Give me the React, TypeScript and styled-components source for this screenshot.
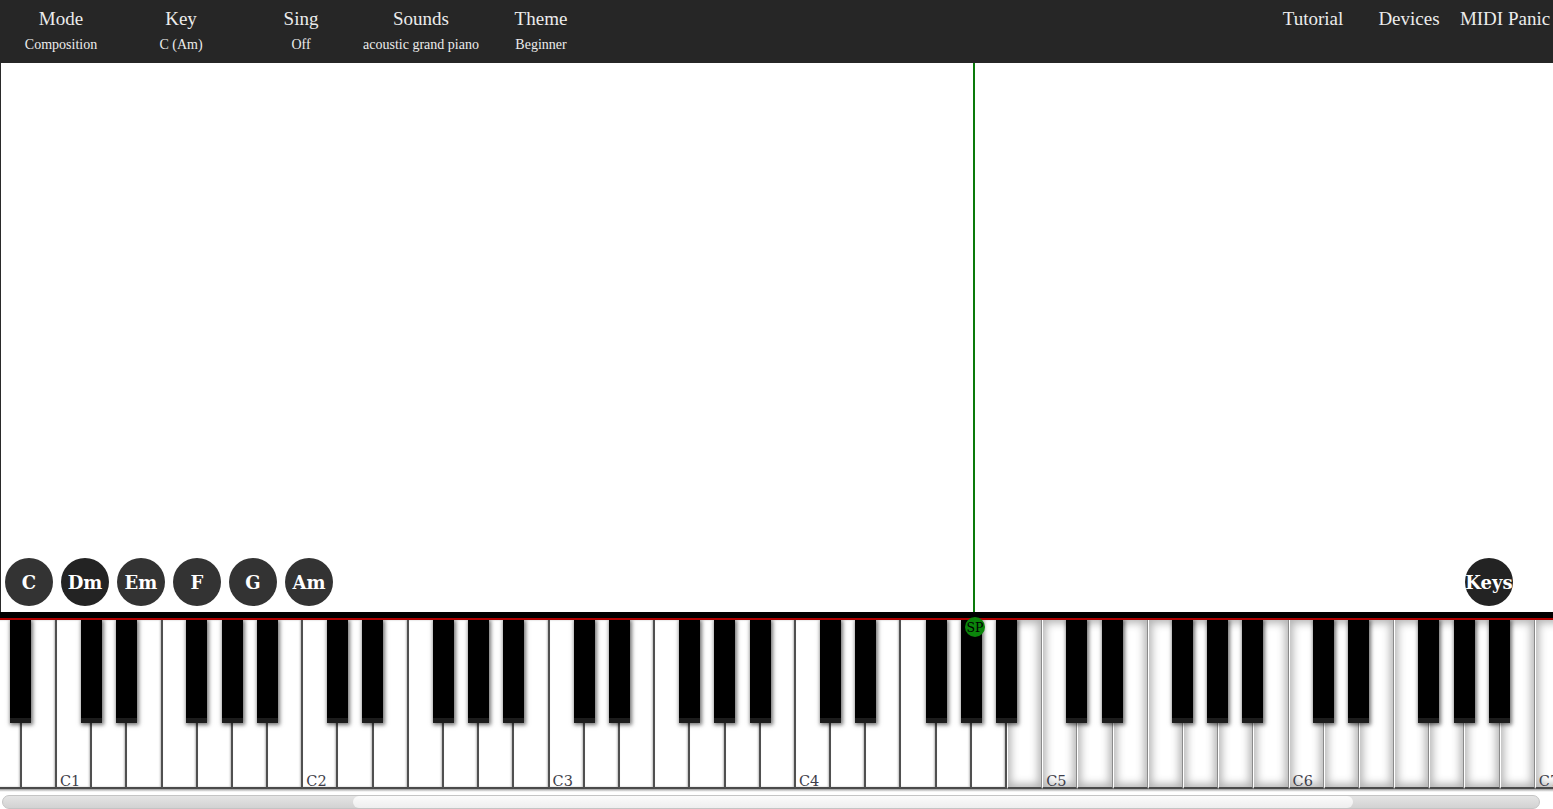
import React from "react";
import styled, { createGlobalStyle } from "styled-components";

const GlobalStyle = createGlobalStyle`
  html, body { margin: 0; padding: 0; background: #fff; overflow: hidden; }
  * { box-sizing: border-box; }
`;

const Page = styled.div`
  display: flex;
  flex-direction: column;
  width: 1553px;
  height: 809px;
  overflow: hidden;
`;

const TopBar = styled.header`
  height: 63px;
  flex: 0 0 63px;
  background: #262626;
  display: flex;
  justify-content: space-between;
  color: #ececec;
  font-family: "Liberation Serif", "Times New Roman", serif;
`;

const MenuGroup = styled.nav`
  display: flex;
  padding-left: 1px;
`;

const MenuItem = styled.div`
  width: 120px;
  display: flex;
  flex-direction: column;
  align-items: center;
  padding-top: 9px;
  cursor: pointer;
`;

const MenuTitle = styled.span`
  font-size: 19px;
  line-height: 20px;
  white-space: nowrap;
`;

const MenuValue = styled.span`
  font-size: 14px;
  line-height: 16px;
  margin-top: 8px;
  white-space: nowrap;
`;

const RightItem = styled.div`
  width: 96px;
  text-align: center;
  padding-top: 9px;
  font-size: 19px;
  line-height: 20px;
  white-space: nowrap;
  cursor: pointer;
`;

const Stage = styled.main`
  flex: 1 1 auto;
  position: relative;
  border-left: 1px solid #2a2a2a;
  display: flex;
  align-items: flex-end;
  justify-content: space-between;
  padding: 0 40px 6px 4px;
`;

const Playhead = styled.div`
  position: absolute;
  left: 972px;
  top: 0;
  bottom: -6px;
  width: 2px;
  background: #0a7a0a;
`;

const ChordRow = styled.div`
  display: flex;
  gap: 8px;
`;

const Chord = styled.button<{ $dark?: boolean }>`
  width: 48px;
  height: 48px;
  border-radius: 50%;
  border: none;
  padding: 0;
  background: ${(p) => (p.$dark ? "#232323" : "#333333")};
  color: #fff;
  font-family: "DejaVu Serif", serif;
  font-weight: bold;
  font-size: 18px;
  display: flex;
  align-items: center;
  justify-content: center;
  white-space: nowrap;
  overflow: visible;
  cursor: pointer;
`;

const PianoSection = styled.section`
  flex: 0 0 auto;
  position: relative;
  display: flex;
  flex-direction: column;
`;

const Rail = styled.div`
  height: 8px;
  background: #000;
  border-bottom: 2px solid #b00000;
`;

const Keyboard = styled.div`
  position: relative;
  height: 169px;
  overflow: hidden;
`;

const WhiteRow = styled.div`
  display: flex;
  height: 100%;
  margin-left: -13.4px;
`;

const WhiteKey = styled.div<{ $soft?: boolean }>`
  flex: 0 0 35.2px;
  height: 100%;
  background: #fff;
  display: flex;
  align-items: flex-end;
  padding: 0 0 0 3px;
  border-right: ${(p) => (p.$soft ? "1px solid #8a8a8a" : "2px solid #505050")};
  border-bottom: 2px solid #4a4a4a;
  box-shadow: ${(p) =>
    p.$soft
      ? "inset 0 0 9px 3px rgba(0,0,0,0.3)"
      : "inset -1px 0 2px rgba(0,0,0,0.25)"};
  ${(p) => (p.$soft ? "border-left: 1px solid #fff;" : "")}
`;

const KeyLabel = styled.span`
  font-family: "DejaVu Serif", serif;
  font-size: 14.5px;
  line-height: 15px;
  margin-bottom: -2px;
  color: #3e3e4a;
`;

const BlackKey = styled.div`
  position: absolute;
  top: 0;
  width: 21px;
  height: 103px;
  background: #000;
  border-bottom: 5px solid #1c1c1c;
  box-shadow: 1px 1px 4px 1px rgba(0, 0, 0, 0.55);
`;

const StartPoint = styled.div`
  position: absolute;
  left: 965px;
  top: 5px;
  width: 20px;
  height: 20px;
  border-radius: 50%;
  background: #0b850b;
  color: #000;
  font-family: "DejaVu Serif", serif;
  font-size: 12.5px;
  display: flex;
  align-items: center;
  justify-content: center;
  z-index: 3;
`;

const KeyShadow = styled.div`
  height: 3px;
  background: linear-gradient(#9a9a9a, #e8e8e8 70%, #fff);
`;

const ScrollArea = styled.div`
  height: 17px;
  padding: 3px 13px 0 2px;
  background: #fff;
`;

const Track = styled.div`
  height: 14px;
  border-radius: 7px;
  background: linear-gradient(#e4e4e4, #d2d2d2);
  border: 1px solid #c4c4c4;
  padding-left: 350px;
  display: flex;
`;

const Thumb = styled.div`
  width: 1000px;
  height: 100%;
  border-radius: 7px;
  background: linear-gradient(#fbfbfb, #eeeeee);
`;

const leftMenu = [
  { title: "Mode", value: "Composition" },
  { title: "Key", value: "C (Am)" },
  { title: "Sing", value: "Off" },
  { title: "Sounds", value: "acoustic grand piano" },
  { title: "Theme", value: "Beginner" },
];

const rightMenu = ["Tutorial", "Devices", "MIDI Panic"];
const chords = ["C", "Dm", "Em", "F", "G", "Am"];

const NOTE_NAMES = ["C", "D", "E", "F", "G", "A", "B"];
const WHITE_W = 35.2;
const START_X = -13.4;

type White = { name: string; octave: number };
const whites: White[] = [
  { name: "A", octave: 0 },
  { name: "B", octave: 0 },
];
for (let o = 1; whites.length < 46; o++) {
  for (const n of NOTE_NAMES) {
    if (whites.length < 46) whites.push({ name: n, octave: o });
  }
}

const blacks: number[] = [];
whites.forEach((w, i) => {
  if (["C", "D", "F", "G", "A"].includes(w.name)) {
    const boundary = START_X + (i + 1) * WHITE_W;
    blacks.push(boundary - 11.5);
  }
});

export default function App() {
  return (
    <>
      <GlobalStyle />
      <Page>
        <TopBar>
          <MenuGroup>
            {leftMenu.map((m) => (
              <MenuItem key={m.title}>
                <MenuTitle>{m.title}</MenuTitle>
                <MenuValue>{m.value}</MenuValue>
              </MenuItem>
            ))}
          </MenuGroup>
          <MenuGroup>
            {rightMenu.map((r) => (
              <RightItem key={r}>{r}</RightItem>
            ))}
          </MenuGroup>
        </TopBar>
        <Stage>
          <Playhead />
          <ChordRow>
            {chords.map((c) => (
              <Chord key={c} $dark={c === "Dm"}>
                {c}
              </Chord>
            ))}
          </ChordRow>
          <Chord $dark>Keys</Chord>
        </Stage>
        <PianoSection>
          <Rail />
          <Keyboard>
            <WhiteRow>
              {whites.map((w, i) => (
                <WhiteKey key={i} $soft={i >= 29}>
                  {w.name === "C" && <KeyLabel>C{w.octave}</KeyLabel>}
                </WhiteKey>
              ))}
            </WhiteRow>
            {blacks.map((x, i) => (
              <BlackKey key={i} style={{ left: `${x}px` }} />
            ))}
          </Keyboard>
          <StartPoint>SP</StartPoint>
          <KeyShadow />
          <ScrollArea>
            <Track>
              <Thumb />
            </Track>
          </ScrollArea>
        </PianoSection>
      </Page>
    </>
  );
}
